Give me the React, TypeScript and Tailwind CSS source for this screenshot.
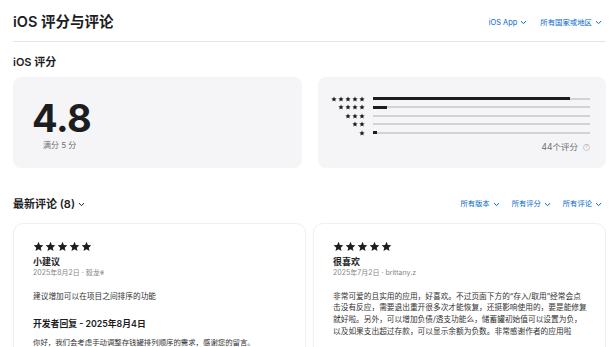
import React from 'react';

const font = { fontFamily: 'Inter, "Noto Sans CJK SC", sans-serif' };

function Chevron() {
  return (
    <svg width="7" height="5" viewBox="0 0 7 5" className="ml-[3px] inline-block">
      <path d="M1 1.2l2.5 2.4L6 1.2" fill="none" stroke="currentColor" strokeWidth="1" />
    </svg>
  );
}

function Star({ size }: { size: number }) {
  return (
    <svg width={size} height={size} viewBox="0 0 24 24">
      <path d="M12 1.8l3 7.1 7.6.6-5.8 5 1.8 7.5L12 18l-6.6 4 1.8-7.5-5.8-5 7.6-.6z" fill="#1d1d1f" />
    </svg>
  );
}

function Stars({ n, size, gap }: { n: number; size: number; gap: string }) {
  return (
    <div className={`flex ${gap}`}>
      {Array.from({ length: n }).map((_, i) => (
        <Star key={i} size={size} />
      ))}
    </div>
  );
}

const dist = [
  { n: 5, pct: 91 },
  { n: 4, pct: 6.5 },
  { n: 3, pct: 0 },
  { n: 2, pct: 0 },
  { n: 1, pct: 2 },
];

function Review({
  title,
  meta,
  body,
  reply,
}: {
  title: string;
  meta: string;
  body: string;
  reply?: { head: string; text: string };
}) {
  return (
    <div className="h-[140px] rounded-[10px] border border-[#f0f0f0] bg-white pl-[19px] pr-[17px] pt-[17px] shadow-[0_1px_3px_rgba(0,0,0,0.04)]">
      <Stars n={5} size={11} gap="gap-[1px]" />
      <div className="mt-[3px] text-[9px] font-semibold leading-[13px] text-[#1d1d1f]">{title}</div>
      <div className="mt-[0px] text-[7px] leading-[10px] text-[#86868b]">{meta}</div>
      <div className="mt-[13px] text-[7.7px] leading-[11.7px] text-[#333]">{body}</div>
      {reply && (
        <>
          <div className="mt-[16px] text-[8.8px] font-semibold leading-[12px] text-[#1d1d1f]">{reply.head}</div>
          <div className="mt-[7px] text-[7.4px] leading-[11px] text-[#333]">{reply.text}</div>
        </>
      )}
    </div>
  );
}

export default function App() {
  return (
    <div className="h-[347px] w-[616px] overflow-hidden bg-white pl-[13px] pr-[10px]" style={font}>
      {/* header */}
      <div className="flex h-[42px] items-center justify-between border-b border-[#e5e5e5] pt-[2px]">
        <div className="text-[14.5px] font-semibold text-[#1d1d1f]">iOS 评分与评论</div>
        <div className="flex items-center gap-[13px] pr-[4px] pt-[3px] text-[7.4px] text-[#0066cc]">
          <span className="flex items-center">iOS App<Chevron /></span>
          <span className="flex items-center">所有国家或地区<Chevron /></span>
        </div>
      </div>

      <div className="pt-[13px] text-[11px] font-semibold leading-[14px] text-[#1d1d1f]">iOS 评分</div>

      {/* rating cards */}
      <div className="mt-[8px] grid grid-cols-2 gap-[16px]">
        <div className="h-[91px] rounded-[8px] bg-[#f5f5f7] pl-[19px] pt-[23px]">
          <div className="text-[38px] font-bold leading-[36px] tracking-[-0.5px] text-[#1d1d1f]">4.8</div>
          <div className="ml-[11px] mt-[3px] text-[8px] text-[#6e6e73]">满分 5 分</div>
        </div>
        <div className="h-[91px] rounded-[8px] bg-[#f5f5f7] pl-[12px] pr-[16px] pt-[19px]">
          <div className="flex flex-col gap-[2.8px]">
            {dist.map((d) => (
              <div key={d.n} className="flex h-[5.7px] items-center">
                <div className="flex w-[35px] justify-end">
                  <Stars n={d.n} size={6} gap="gap-[1px]" />
                </div>
                <div className="relative ml-[8px] h-[2px] flex-1 bg-[#d2d2d7]">
                  <div className="absolute left-0 top-[-0.5px] h-[3px] bg-[#1d1d1f]" style={{ width: `${d.pct}%` }} />
                </div>
              </div>
            ))}
          </div>
          <div className="mt-[5px] flex items-center justify-end text-[8.5px] text-[#6e6e73]">
            44个评分
            <span className="ml-[5px] flex h-[7px] w-[7px] items-center justify-center rounded-full border border-[#c7c7cc] text-[5px] text-[#aaa]">?</span>
          </div>
        </div>
      </div>

      {/* latest reviews */}
      <div className="mt-[28px] flex items-center justify-between">
        <div className="flex items-center text-[11px] font-semibold text-[#1d1d1f]">
          最新评论 (8)<Chevron />
        </div>
        <div className="flex items-center gap-[12px] pr-[4px] text-[7.3px] text-[#0066cc]">
          <span className="flex items-center">所有版本<Chevron /></span>
          <span className="flex items-center">所有评分<Chevron /></span>
          <span className="flex items-center">所有评论<Chevron /></span>
        </div>
      </div>

      <div className="mt-[10px] grid grid-cols-2 gap-[7px]">
        <Review
          title="小建议"
          meta="2025年8月2日 · 毅龙※"
          body="建议增加可以在项目之间排序的功能"
          reply={{
            head: '开发者回复 - 2025年8月4日',
            text: '你好，我们会考虑手动调整存钱罐排列顺序的需求，感谢您的留言。',
          }}
        />
        <Review
          title="很喜欢"
          meta="2025年7月2日 · brittany.z"
          body="非常可爱的且实用的应用，好喜欢。不过页面下方的“存入/取用”经常会点击没有反应，需要退出重开很多次才能恢复，还挺影响使用的，要是能修复就好啦。另外，可以增加负债/透支功能么，储蓄罐初始值可以设置为负，以及如果支出超过存款，可以显示余额为负数。非常感谢作者的应用啦"
        />
      </div>
    </div>
  );
}
